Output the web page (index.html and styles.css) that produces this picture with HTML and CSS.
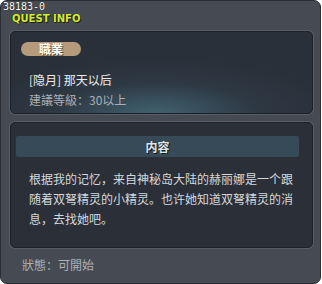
FILE: index.html
```html
<!DOCTYPE html>
<html lang="zh">

<head>
    <meta charset="UTF-8">
    <title>Quest Info</title>
    <link rel="stylesheet" href="styles.css">
</head>

<body>
    <div class="window">
        <div class="window-head">
            <div class="quest-id">38183-0</div>
            <div class="title">QUEST INFO</div>
        </div>

        <div class="panel panel-summary">
            <div class="badge">職業</div>
            <div class="quest-name">[隐月] 那天以后</div>
            <div class="quest-level">建議等級：30以上</div>
        </div>

        <div class="panel panel-content">
            <div class="section-bar">内容</div>
            <p class="quest-text">根据我的记忆，来自神秘岛大陆的赫丽娜是一个跟随着双弩精灵的小精灵。也许她知道双弩精灵的消息，去找她吧。</p>
        </div>

        <div class="status">狀態：可開始</div>
    </div>
</body>

</html>
```

FILE: styles.css
```css
body {
    margin: 0;
    background: #ffffff;
    font-family: "Noto Sans CJK SC", "Noto Sans", sans-serif;
    font-size: 12px;
}

.window {
    box-sizing: border-box;
    width: 321px;
    height: 284px;
    background: #464b53;
    border: 1px solid #2b2f35;
    border-radius: 7px;
    display: flex;
    flex-direction: column;
}

.window-head {
    height: 30px;
    padding-left: 2px;
    display: flex;
    flex-direction: column;
}

.quest-id {
    font-family: "DejaVu Sans Mono", monospace;
    font-size: 10px;
    line-height: 10px;
    margin-top: 1px;
    color: #ffffff;
    text-shadow: 0 0 1px #000;
}

.title {
    font-family: "DejaVu Sans", sans-serif;
    font-weight: bold;
    font-size: 10px;
    line-height: 11px;
    margin: 1px 0 0 9px;
    color: #d3e83a;
    text-shadow: 1px 1px 0 #1d2208, -1px 0 0 #2a3010;
}

.panel {
    box-sizing: border-box;
    width: 303px;
    margin-left: 9px;
    border: 1px solid #1e2228;
    border-radius: 5px;
    box-shadow: 0 0 0 1px #575d65;
    background: #2a2f38;
}

.panel-summary {
    height: 83px;
    padding: 10px 10px 0;
    background: radial-gradient(ellipse 75% 85% at 48% 100%, #41616f 0%, #33495655 45%, #2a303a 80%), #2a303a;
}

.badge {
    width: 60px;
    height: 14px;
    border-radius: 7px;
    background: #b59b7b;
    color: #ffffff;
    font-weight: bold;
    font-size: 12px;
    line-height: 14px;
    text-align: center;
    text-shadow: 1px 1px 0 #5a4a36;
}

.quest-name {
    margin: 14px 0 0 8px;
    line-height: 20px;
    color: #ececec;
}

.quest-level {
    margin-left: 8px;
    line-height: 20px;
    color: #a9afb5;
}

.panel-content {
    height: 126px;
    margin-top: 8px;
    padding: 13px 13px 0 5px;
}

.section-bar {
    height: 21px;
    background: #364a57;
    border-radius: 2px;
    color: #dde5ea;
    font-weight: bold;
    line-height: 21px;
    text-align: center;
    text-shadow: 1px 1px 0 #121619;
}

.quest-text {
    margin: 12px 0 0 13px;
    width: 268px;
    line-height: 20px;
    color: #d5d9dc;
}

.status {
    margin: 9px 0 0 21px;
    line-height: 16px;
    color: #adb1b6;
}
```
